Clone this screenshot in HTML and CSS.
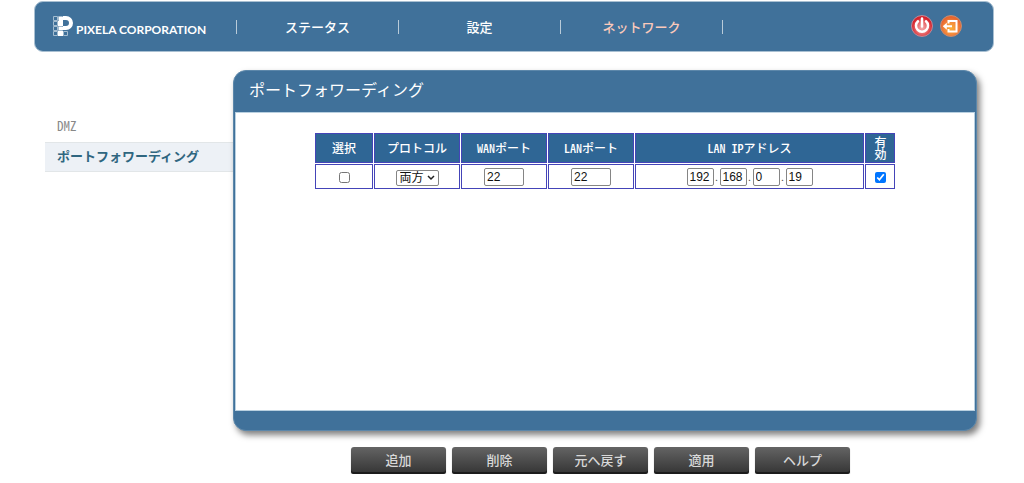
FILE: index.html
```
<!DOCTYPE html>
<html lang="ja">
<head>
<meta charset="utf-8">
<meta name="viewport" content="width=device-width, initial-scale=1">
<title>ポートフォワーディング</title>
<link rel="stylesheet" href="styles.css">
</head>
<body>
<header class="topbar">
  <a class="brand" href="#">
    <svg class="brand-mark" viewBox="0 0 20 20" aria-hidden="true">
      <path class="outline" d="M.5 .5h4v4h-4zM.5 5.500h4v4h-4zM.5 10.500h4v4h-4zM.5 15.500h4v4h-4zM5.500 .5h4v4h-4zM5.500 10.500h4v4h-4zM10.500 15.500h4v4h-4z"/>
      <path class="solid" d="M10 0h3a7 7 0 0 1 0 14h-3v-4h3a3 3 0 0 0 0-6h-3zM5 5h5v5H5zM5 15h5v5H5z"/>
      <path class="solid" d="M6 1h4v4H6zM6 11h4v3H6z"/>
    </svg>
    <span class="brand-name">PIXELA CORPORATION</span>
  </a>
  <nav class="menu">
    <a href="#">ステータス</a>
    <a href="#">設定</a>
    <a class="current" href="#">ネットワーク</a>
  </nav>
  <div class="tools">
    <button type="button" aria-label="電源">
      <svg viewBox="0 0 22 22" aria-hidden="true">
        <defs><radialGradient id="red" cy=".6"><stop offset="0" stop-color="#f4a9aa"/><stop offset=".55" stop-color="#e8696b"/><stop offset="1" stop-color="#d5222b"/></radialGradient></defs>
        <circle cx="11" cy="11" r="10.500" fill="url(#red)" stroke="#bd8c9b"/>
        <path class="glyph" d="M7 6.300a6 6 0 1 0 8 0M11 3.500v8"/>
      </svg>
    </button>
    <button type="button" aria-label="ログアウト">
      <svg viewBox="0 0 22 22" aria-hidden="true">
        <defs><radialGradient id="orange" cy=".6"><stop offset="0" stop-color="#fbb034"/><stop offset=".6" stop-color="#f48a3c"/><stop offset="1" stop-color="#e8662f"/></radialGradient></defs>
        <circle cx="11" cy="11" r="10.500" fill="url(#orange)" stroke="#c08f78"/>
        <path class="glyph thin" d="M8.500 8.500V6h8v10.500h-8V14M12 11.300H5"/>
        <path fill="#fff" d="M2.800 11.300l4-3.500v7z"/>
      </svg>
    </button>
  </div>
</header>
<div class="page">
  <nav class="side">
    <a href="#">DMZ</a>
    <a class="current" href="#">ポートフォワーディング</a>
  </nav>
  <main class="main">
    <section class="panel">
      <h1>ポートフォワーディング</h1>
      <div class="panel-body">
        <table class="rules">
          <colgroup><col class="c-select"><col class="c-mid"><col class="c-mid"><col class="c-mid"><col class="c-ip"><col class="c-on"></colgroup>
          <thead>
            <tr><th>選択</th><th>プロトコル</th><th>WANポート</th><th>LANポート</th><th>LAN IPアドレス</th><th><span class="upright">有効</span></th></tr>
          </thead>
          <tbody>
            <tr>
              <td><input type="checkbox" aria-label="選択"></td>
              <td>
                <span class="picker">
                  <select aria-label="プロトコル"><option>両方</option><option>TCP</option><option>UDP</option></select>
                  <svg viewBox="0 0 8 6" aria-hidden="true"><path d="M1 1l3 3 3-3"/></svg>
                </span>
              </td>
              <td><input class="port" type="text" value="22" aria-label="WANポート"></td>
              <td><input class="port" type="text" value="22" aria-label="LANポート"></td>
              <td>
                <div class="ip">
                  <input type="text" value="192" aria-label="IPアドレス 1"><span>.</span>
                  <input type="text" value="168" aria-label="IPアドレス 2"><span>.</span>
                  <input type="text" value="0" aria-label="IPアドレス 3"><span>.</span>
                  <input type="text" value="19" aria-label="IPアドレス 4">
                </div>
              </td>
              <td><input type="checkbox" checked aria-label="有効"></td>
            </tr>
          </tbody>
        </table>
      </div>
    </section>
    <div class="actions">
      <button type="button">追加</button>
      <button type="button">削除</button>
      <button type="button">元へ戻す</button>
      <button type="button">適用</button>
      <button type="button">ヘルプ</button>
    </div>
  </main>
</div>
</body>
</html>
```
FILE: styles.css
```
* { box-sizing: border-box; }

body {
  margin: 0;
  padding: 1px 30px 0 34px;
  background: #fff;
  font: 13px/18px "Noto Sans CJK JP", sans-serif;
  font-feature-settings: "hwid";
}

a { text-decoration: none; }

.topbar {
  display: flex;
  align-items: center;
  height: 51px;
  padding: 0 31px 0 18px;
  border: 1px solid #a9c0d2;
  border-radius: 9px;
  background: #40719a;
}

.brand {
  display: flex;
  align-items: center;
  width: 183px;
  gap: 3px;
  padding-bottom: 1px;
  color: #fff;
  font: bold 12px/20px Lato, sans-serif;
  font-feature-settings: normal;
  white-space: nowrap;
}
.brand-mark { width: 20px; height: 20px; }
.brand-mark .outline { fill: #40719a; stroke: #a4bdd0; }
.brand-mark .solid { fill: #fff; }
.brand-name { padding-top: 8px; }

.menu { display: flex; border-left: 1px solid #b9cbd9; }
.menu a {
  width: 162px;
  border-right: 1px solid #b9cbd9;
  color: #fff;
  font-weight: 500;
  line-height: 14px;
  text-align: center;
}
.menu .current { color: #fbc9bb; }

.tools { display: flex; gap: 7px; margin-left: auto; padding-bottom: 1px; }
.tools button { width: 22px; height: 22px; padding: 0; border: 0; background: none; }
.tools svg { display: block; }
.glyph { fill: none; stroke: #fff; stroke-width: 2.500; stroke-linecap: round; }
.glyph.thin { stroke-width: 2; stroke-linecap: butt; }

.page { display: flex; padding: 18px 17px 0 11px; }

.side { width: 188px; padding-top: 42px; }
.side a {
  display: block;
  padding: 4px 12px 6px;
  border-top: 1px solid transparent;
  border-bottom: 1px solid transparent;
  color: #888;
}
.side .current {
  border-color: #e2e6e8;
  background: #edf1f6;
  color: #2f6680;
  font-weight: bold;
}

.main { flex: 1; min-width: 0; }
.panel {
  padding: 0 1px 19px;
  border: 1px solid #5c87aa;
  border-radius: 13px;
  background: #40719a;
  box-shadow: 3px 4px 6px rgba(0, 0, 0, .5);
}
.panel h1 {
  margin: 0;
  padding: 6px 14px 11px;
  color: #fff;
  font-size: 16px;
  font-weight: 400;
  line-height: 24px;
}
.panel-body {
  min-height: 299px;
  padding: 19px 24px;
  border: 1px solid #b9d0e0;
  background: #fff;
}

.rules {
  width: 582px;
  max-width: 100%;
  margin: 0 auto;
  border-collapse: separate;
  border-spacing: 1px;
  table-layout: fixed;
}
.c-select { width: 58px; }
.c-mid { width: 86px; }
.c-on { width: 30px; }
.rules th, .rules td { padding: 0; border: 1px solid #4444b8; text-align: center; }
.rules th {
  height: 30px;
  background: #2f6695;
  color: #fff;
  font-size: 12px;
  font-weight: 500;
  line-height: 12px;
}
.upright {
  display: inline-block;
  writing-mode: vertical-rl;
  vertical-align: middle;
}
.rules td { height: 25px; }
.rules input, .rules select {
  margin: 0;
  font: 12px/16px "Liberation Sans", "Noto Sans CJK JP", sans-serif;
  font-feature-settings: normal;
  color: #111;
}
.rules input[type="checkbox"] { width: 11px; height: 11px; vertical-align: middle; }
.rules input[type="text"] {
  height: 18px;
  padding: 0 2px;
  border: 1px solid #858585;
  border-radius: 2px;
  background: #fff;
  vertical-align: middle;
}
.rules .port { width: 40px; }
.ip {
  display: flex;
  align-items: center;
  justify-content: center;
  color: #444;
  font-size: 10px;
  line-height: 16px;
}
.ip input { width: 27px; }
.ip span { width: 6px; }

.picker { display: inline-grid; align-items: center; vertical-align: middle; }
.picker select, .picker svg { grid-area: 1 / 1; }
.picker select {
  width: 43px;
  height: 16px;
  padding: 0 3px;
  border: 1px solid #858585;
  border-radius: 2px;
  background: #fff;
  appearance: none;
  line-height: 14px;
}
.picker svg {
  width: 8px;
  height: 6px;
  margin-right: 4px;
  justify-self: end;
  pointer-events: none;
}
.picker path { fill: none; stroke: #222; stroke-width: 1.500; }

.actions { display: flex; justify-content: center; gap: 6px; padding: 16px 9px 0 0; }
.actions button {
  width: 95px;
  height: 27px;
  padding: 0 0 1px;
  border: 0;
  border-radius: 3px;
  background: linear-gradient(#646464, #343434);
  box-shadow: inset 0 -2px #1c1c1c, 0 1px 1px rgba(0, 0, 0, .4);
  color: #d8d8d8;
  font: 500 13px/18px "Noto Sans CJK JP", sans-serif;
}
```
